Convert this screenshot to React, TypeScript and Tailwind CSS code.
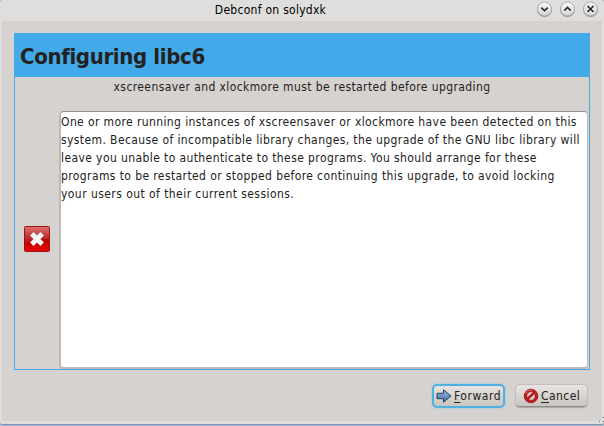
import React from "react";

const lines = [
  { text: "One or more running instances of xscreensaver or xlockmore have been detected on this", cls: "tracking-[0.39px]" },
  { text: "system. Because of incompatible library changes, the upgrade of the GNU libc library will", cls: "tracking-[0.4px]" },
  { text: "leave you unable to authenticate to these programs. You should arrange for these", cls: "tracking-[0.4px]" },
  { text: "programs to be restarted or stopped before continuing this upgrade, to avoid locking", cls: "tracking-[0.4px]" },
  { text: "your users out of their current sessions.", cls: "tracking-[0.44px]" },
];

function WindowButton({ d }: { d: string }) {
  return (
    <svg width="17" height="18" viewBox="0 0 17 18">
      <defs>
        <linearGradient id="knob" x1="0" y1="0" x2="0" y2="1">
          <stop offset="0" stopColor="#fbfbfa" />
          <stop offset="1" stopColor="#d2d0cd" />
        </linearGradient>
      </defs>
      <circle cx="8.5" cy="9.8" r="7.4" fill="#a5a3a1" />
      <circle cx="8.5" cy="9" r="7" fill="url(#knob)" stroke="#a19f9d" strokeWidth="0.8" />
      <path d={d} fill="none" stroke="#fff" strokeWidth="1.6" transform="translate(0 1)" />
      <path d={d} fill="none" stroke="#282828" strokeWidth="1.7" />
    </svg>
  );
}

function ErrorIcon() {
  return (
    <svg width="26" height="26" viewBox="0 0 26 26">
      <defs>
        <linearGradient id="err" x1="0" y1="0" x2="0" y2="1">
          <stop offset="0" stopColor="#c02828" />
          <stop offset="0.5" stopColor="#a80808" />
          <stop offset="0.6" stopColor="#b80000" />
          <stop offset="1" stopColor="#ec0808" />
        </linearGradient>
        <linearGradient id="gloss" x1="0" y1="0" x2="0" y2="1">
          <stop offset="0" stopColor="#f0a0a0" stopOpacity="0.6" />
          <stop offset="1" stopColor="#e06060" stopOpacity="0.2" />
        </linearGradient>
      </defs>
      <rect x="0.5" y="0.5" width="25" height="25" rx="1.2" fill="url(#err)" stroke="#9b1414" />
      <path d="M1 1h24v12Q13 13 1 17z" fill="url(#gloss)" />
      <path d="M7.800 7.800l10.400 10.400M18.200 7.800l-10.400 10.400" stroke="#f6f6f6" strokeWidth="5" />
    </svg>
  );
}

function ForwardIcon() {
  return (
    <svg className="shrink-0" width="16" height="16" viewBox="0 0 16 16">
      <defs>
        <linearGradient id="arrow" x1="0" y1="0" x2="0" y2="1">
          <stop offset="0" stopColor="#a9c3e6" />
          <stop offset="1" stopColor="#3465a4" />
        </linearGradient>
      </defs>
      <path d="M1 5.300h6.500v-3.500L15 8 7.500 14.200v-3.500h-6.500z" fill="url(#arrow)" stroke="#2b3f60" strokeLinejoin="round" />
    </svg>
  );
}

function CancelIcon() {
  return (
    <svg className="shrink-0" width="16" height="16" viewBox="0 0 16 16">
      <circle cx="8" cy="8" r="6.800" fill="#c41e1e" stroke="#8c1010" strokeWidth="0.8" />
      <circle cx="8" cy="8" r="4.200" fill="#ddd7d4" stroke="#8c1010" strokeWidth="0.6" />
      <path d="M4.200 11.300L11.500 4.400" stroke="#c01818" strokeWidth="2.600" />
      <path d="M2.500 5.500Q5 1.500 9.500 1.900" fill="none" stroke="#e66a6a" strokeWidth="1" />
    </svg>
  );
}

export default function App() {
  return (
    <div className="flex h-[426px] w-[604px] flex-col overflow-hidden bg-[#b3b6ba] font-['DejaVu_Sans_Condensed','DejaVu_Sans',sans-serif] text-[12px] text-[#222222]">
      <div className="relative flex h-[425px] shrink-0 flex-col rounded-[3px] border-b border-[#7094c4] bg-[#dfdedc] px-[2px] pb-[3px]">
        <header className="relative flex h-[21px] shrink-0 items-center justify-center">
          <span className="mr-[63px] whitespace-nowrap leading-[21px] tracking-[0.27px] text-black">Debconf on solydxk</span>
          <div className="absolute right-[3px] top-0 flex gap-[6px]">
            <WindowButton d="M5.300 7.700L8.500 10.900l3.200-3.200" />
            <WindowButton d="M5.300 10.600L8.500 7.400l3.200 3.200" />
            <WindowButton d="M5.500 6l6 6M11.500 6l-6 6" />
          </div>
        </header>
        <main className="flex flex-1 flex-col bg-[#d6d2cf] px-[12px] pt-[12px]">
          <section className="flex h-[337px] w-[576px] flex-col border border-[#43aae9]">
            <h1 className="h-[43px] shrink-0 bg-[#43aae9] pl-[5px] text-[22px] font-bold leading-[45px]">
              <span className="whitespace-nowrap tracking-[-0.35px]">Configuring libc6</span>
            </h1>
            <p className="h-[34px] shrink-0 text-center leading-[20px]">
              <span className="whitespace-nowrap tracking-[0.4px]">xscreensaver and xlockmore must be restarted before upgrading</span>
            </p>
            <div className="flex flex-1">
              <div className="flex w-[45px] pl-[9px] pt-[115px]">
                <ErrorIcon />
              </div>
              <div className="h-[258px] w-[528px] rounded-[4px] border border-b-2 border-[#bdb9b6] border-t-[#92908e] bg-white shadow-[-1px_0_0_#bdb9b6]">
                {lines.map((l) => (
                  <div key={l.text} className="h-[18px] whitespace-nowrap leading-[20px]">
                    <span className={l.cls}>{l.text}</span>
                  </div>
                ))}
              </div>
            </div>
          </section>
          <footer className="mt-[14px] flex justify-end gap-[10px] pr-[2px]">
            <button className="flex h-[24px] w-[73px] items-center rounded-[5px] border-2 border-[#4fb0e2] bg-linear-to-b from-[#e6e3e1] to-[#cbc5c1] pl-[2px] shadow-[0_0_2px_#7cc0e4]">
              <ForwardIcon />
              <span className="ml-[2px] whitespace-nowrap tracking-[0.55px]"><u className="underline-offset-2">F</u>orward</span>
            </button>
            <button className="flex h-[23px] w-[73px] items-center rounded-[5px] border border-[#c2bebb] border-b-[#8f8b88] bg-linear-to-b from-[#e8e5e3] to-[#cbc5c1] pl-[7px] shadow-[0_1px_1px_#aaa6a3]">
              <CancelIcon />
              <span className="ml-[2px] whitespace-nowrap tracking-[0.45px]"><u className="underline-offset-2">C</u>ancel</span>
            </button>
          </footer>
        </main>
        <svg className="absolute bottom-0 right-0" width="6" height="7" viewBox="0 0 6 7">
          <path d="M5 0h1v1h-1zM5 4h1v1h-1zM1 4h1v1h-1z" fill="#6b6966" />
        </svg>
      </div>
    </div>
  );
}
